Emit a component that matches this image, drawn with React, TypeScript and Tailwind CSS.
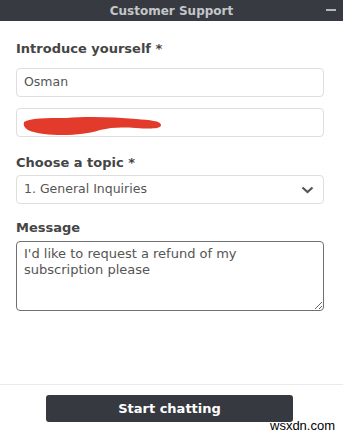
import React from 'react';

const font = { fontFamily: '"DejaVu Sans", Verdana, sans-serif' };

const Label: React.FC<{ children: React.ReactNode }> = ({ children }) => (
  <div className="text-[13px] leading-4 font-bold text-[#454545]">{children}</div>
);

export default function App() {
  return (
    <div className="relative w-[343px] h-[435px] bg-white flex flex-col overflow-hidden" style={font}>
      {/* Header */}
      <div className="relative h-[21px] bg-[#373a40] flex items-center justify-center shrink-0">
        <span className="text-[12px] font-bold text-[#c4c6ca]">Customer Support</span>
        <span className="absolute right-[7px] top-[9px] w-[10px] h-[2px] bg-[#b4b6bc]" />
      </div>

      {/* Form */}
      <div className="flex-1 flex flex-col pl-4 pr-[19px] pt-[20px]">
        <Label>Introduce yourself *</Label>
        <div className="mt-[11px] h-[29px] border border-[#dedede] rounded-[4px] flex items-center px-[7px] text-[12.5px] text-[#555]">
          Osman
        </div>
        <div className="relative mt-[11px] h-[29px] border border-[#dedede] rounded-[4px]">
          <svg className="absolute left-[5px] top-[6px]" width="142" height="22" viewBox="0 0 142 22">
            <path
              d="M2 7 C8 3 24 3 44 3 C66 1 92 2 114 4 C128 5 139 6 139 10 C139 14 128 14 114 13 C100 12 90 12 78 15 C64 20 40 21 22 19 C8 17 0 14 2 7 Z"
              fill="#e23a2b"
            />
          </svg>
        </div>

        <div className="mt-[18px]">
          <Label>Choose a topic *</Label>
        </div>
        <div className="mt-[4px] h-[29px] border border-[#dedede] rounded-[4px] flex items-center justify-between px-[7px] text-[12.5px] text-[#555]">
          <span>1. General Inquiries</span>
          <svg width="13" height="8" viewBox="0 0 13 8" className="mr-[2px]">
            <path d="M1.5 1.5 L6.5 6 L11.5 1.5" fill="none" stroke="#555" strokeWidth="2.2" />
          </svg>
        </div>

        <div className="mt-[16px]">
          <Label>Message</Label>
        </div>
        <textarea
          className="mt-[5px] h-[70px] w-full border border-[#707070] rounded-[4px] px-[7px] py-[4px] text-[13px] leading-[16px] text-[#555] outline-none resize-y"
          style={font}
          defaultValue="I'd like to request a refund of my subscription please"
        />
      </div>

      {/* Footer */}
      <div className="h-[51px] border-t border-[#ebebeb] flex items-start pl-[46px] pt-[10px] shrink-0">
        <button className="w-[247px] h-[27px] bg-[#36393f] rounded-[3px] text-white text-[13px] font-bold" style={font}>
          Start chatting
        </button>
      </div>

      <span
        className="absolute left-[270px] top-[418px] text-[13px] leading-4 text-black"
        style={{ fontFamily: '"Liberation Sans", Arial, sans-serif' }}
      >
        wsxdn.com
      </span>
    </div>
  );
}
